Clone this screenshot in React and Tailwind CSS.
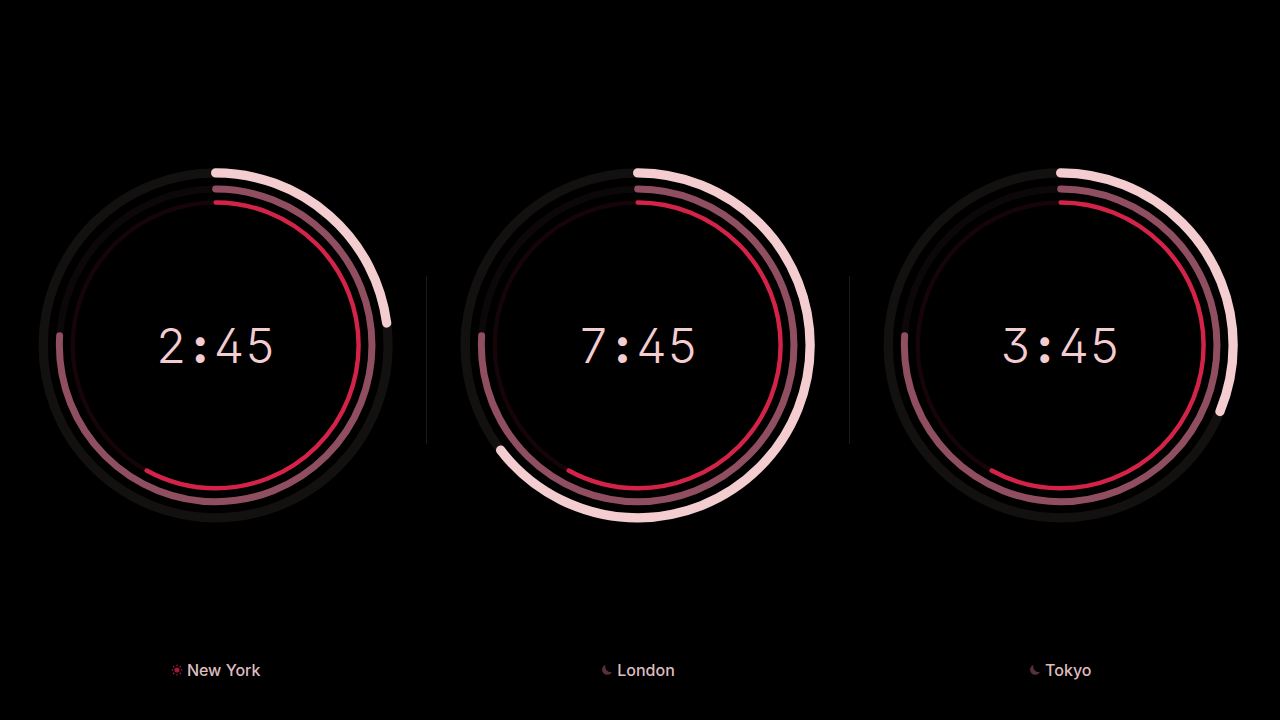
import React from 'react';

const clocks = [
  { city: 'New York', hours: 2, minutes: 45, seconds: 34.8, isDay: true },
  { city: 'London', hours: 7, minutes: 45, seconds: 34.8, isDay: false },
  { city: 'Tokyo', hours: 3, minutes: 45, seconds: 34.8, isDay: false },
];

const Ring = ({ radius, width, progress, color, track }) => {
  const circumference = 2 * Math.PI * radius;

  return (
    <g fill="none" strokeWidth={width} transform="rotate(-90 180 179.7)">
      <circle cx="180" cy="179.7" r={radius} stroke={track} />
      <circle
        cx="180"
        cy="179.7"
        r={radius}
        stroke={color}
        strokeLinecap="round"
        strokeDasharray={`${circumference * progress} ${circumference}`}
      />
    </g>
  );
};

const SunIcon = () => (
  <svg className="h-3 w-3 text-[#a01b38]" viewBox="0 0 12 12" fill="currentColor" aria-hidden="true">
    <circle cx="6" cy="6" r="2.6" />
    {[0, 45, 90, 135, 180, 225, 270, 315].map((angle) => (
      <circle key={angle} cx="6" cy="1.3" r="0.8" transform={`rotate(${angle} 6 6)`} />
    ))}
  </svg>
);

const MoonIcon = () => (
  <svg className="h-3 w-3 text-[#56303b]" viewBox="0 0 12 12" fill="currentColor" aria-hidden="true">
    <path d="M4.4 0.8A5.2 5.2 0 1 0 11 7.8C7 9.2 3.4 5.4 4.4 0.8Z" />
  </svg>
);

const Clock = ({ city, hours, minutes, seconds, isDay }) => {
  const hourProgress = (hours + minutes / 60) / 12;
  const minuteProgress = (minutes + seconds / 60) / 60;
  const secondProgress = seconds / 60;

  return (
    <section className="flex min-w-0 flex-1 flex-col pt-[42px] pb-[38px]">
      <div className="flex min-h-0 flex-1 items-center justify-center px-8">
        <div className="relative w-full">
          <svg className="block w-full" viewBox="0 0 360 360" aria-hidden="true">
            <Ring radius={172.8} width={9.3} progress={hourProgress} color="#f3cdd0" track="#12110f" />
            <Ring radius={156.6} width={7} progress={minuteProgress} color="#8f4f61" track="#0c0709" />
            <Ring radius={143.2} width={4.4} progress={secondProgress} color="#d42348" track="#150408" />
          </svg>
          <time className="absolute inset-0 flex items-center justify-center text-5xl font-light text-[#f3cdd0] tabular-nums [font-feature-settings:'tnum','ss01']">
            <span>
              {hours}
              <span className="px-[7px] font-extrabold">:</span>
              {minutes}
            </span>
          </time>
        </div>
      </div>
      <div className="flex items-center justify-center gap-1 pt-2 leading-6">
        {isDay ? <SunIcon /> : <MoonIcon />}
        <h2 className="text-base font-medium text-[#dfbcbf]">{city}</h2>
      </div>
    </section>
  );
};

const App = () => {
  return (
    <main className="flex h-screen items-stretch bg-black pr-2 pl-1 font-['Inter',sans-serif]">
      {clocks.map((clock, index) => (
        <React.Fragment key={clock.city}>
          {index > 0 && <div className="-mx-px h-[168px] w-px self-center bg-[#191919]" />}
          <Clock {...clock} />
        </React.Fragment>
      ))}
    </main>
  );
};

export default App;
